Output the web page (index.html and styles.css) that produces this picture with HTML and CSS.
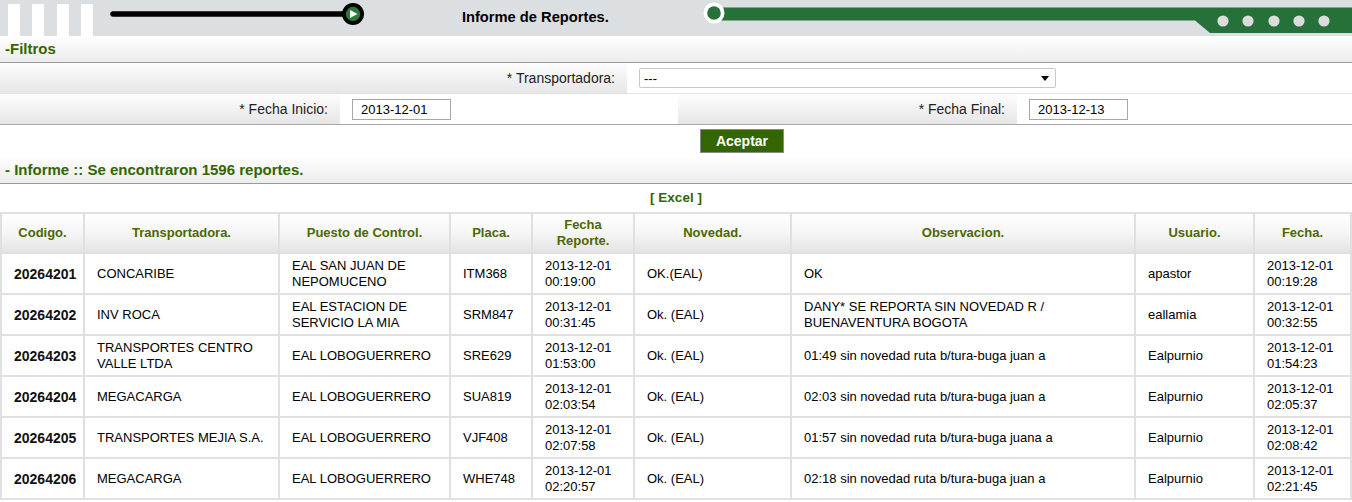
FILE: index.html
```html
<!DOCTYPE html>
<html lang="es">
<head>
<meta charset="utf-8">
<title>Informe de Reportes</title>
<link rel="stylesheet" href="styles.css">
</head>
<body>
<header class="top">
  <div class="bars"><span></span><span></span><span></span><span></span></div>
  <svg class="slider" width="270" height="36" viewBox="0 0 270 36">
    <line x1="12" y1="14" x2="245" y2="14" stroke="#000" stroke-width="5.5" stroke-linecap="round"/>
    <circle cx="252" cy="14" r="11" fill="#000"/>
    <circle cx="252" cy="14" r="7.2" fill="#2a7a3c"/>
    <polygon points="249,10 249,18 256.5,14" fill="#fff"/>
  </svg>
  <h1 class="title">Informe de Reportes.</h1>
  <svg class="track" width="652" height="36" viewBox="0 0 652 36">
    <path d="M18,7.5 H652 V33 H510 L495,20.5 H18 Z" fill="#26713a"/>
    <circle cx="14" cy="13" r="10.5" fill="#fff"/>
    <circle cx="14" cy="13" r="6.8" fill="#26713a"/>
    <circle cx="523" cy="21" r="5.6" fill="#dcdcdc"/>
    <circle cx="548" cy="21" r="5.6" fill="#dcdcdc"/>
    <circle cx="574" cy="21" r="5.6" fill="#dcdcdc"/>
    <circle cx="599" cy="21" r="5.6" fill="#dcdcdc"/>
    <circle cx="624" cy="21" r="5.6" fill="#dcdcdc"/>
  </svg>
</header>

<div class="section-bar">-Filtros</div>

<div class="frow frow-1">
  <div class="lbl">* Transportadora:</div>
  <div class="fld">
    <div class="select"><span>---</span><span class="arrow"></span></div>
  </div>
</div>
<div class="frow frow-2">
  <div class="lbl">* Fecha Inicio:</div>
  <div class="fld"><input class="date" type="text" value="2013-12-01"></div>
  <div class="lbl">* Fecha Final:</div>
  <div class="fld"><input class="date" type="text" value="2013-12-13"></div>
</div>
<div class="actions"><button class="btn" type="button">Aceptar</button></div>

<div class="section-bar informe">- Informe :: Se encontraron 1596 reportes.</div>
<div class="excel">[ Excel ]</div>

<table class="grid">
  <colgroup>
    <col class="c1"><col class="c2"><col class="c3"><col class="c4"><col class="c5"><col class="c6"><col class="c7"><col class="c8"><col class="c9">
  </colgroup>
  <thead>
    <tr>
      <th>Codigo.</th><th>Transportadora.</th><th>Puesto de Control.</th><th>Placa.</th><th>Fecha<br>Reporte.</th><th>Novedad.</th><th>Observacion.</th><th>Usuario.</th><th>Fecha.</th>
    </tr>
  </thead>
  <tbody>
    <tr><td class="code">20264201</td><td>CONCARIBE</td><td>EAL SAN JUAN DE NEPOMUCENO</td><td>ITM368</td><td>2013-12-01<br>00:19:00</td><td>OK.(EAL)</td><td>OK</td><td>apastor</td><td>2013-12-01<br>00:19:28</td></tr>
    <tr><td class="code">20264202</td><td>INV ROCA</td><td>EAL ESTACION DE SERVICIO LA MIA</td><td>SRM847</td><td>2013-12-01<br>00:31:45</td><td>Ok. (EAL)</td><td>DANY* SE REPORTA SIN NOVEDAD R / BUENAVENTURA BOGOTA</td><td>eallamia</td><td>2013-12-01<br>00:32:55</td></tr>
    <tr><td class="code">20264203</td><td>TRANSPORTES CENTRO VALLE LTDA</td><td>EAL LOBOGUERRERO</td><td>SRE629</td><td>2013-12-01<br>01:53:00</td><td>Ok. (EAL)</td><td>01:49 sin novedad ruta b/tura-buga juan a</td><td>Ealpurnio</td><td>2013-12-01<br>01:54:23</td></tr>
    <tr><td class="code">20264204</td><td>MEGACARGA</td><td>EAL LOBOGUERRERO</td><td>SUA819</td><td>2013-12-01<br>02:03:54</td><td>Ok. (EAL)</td><td>02:03 sin novedad ruta b/tura-buga juan a</td><td>Ealpurnio</td><td>2013-12-01<br>02:05:37</td></tr>
    <tr><td class="code">20264205</td><td>TRANSPORTES MEJIA S.A.</td><td>EAL LOBOGUERRERO</td><td>VJF408</td><td>2013-12-01<br>02:07:58</td><td>Ok. (EAL)</td><td>01:57 sin novedad ruta b/tura-buga juana a</td><td>Ealpurnio</td><td>2013-12-01<br>02:08:42</td></tr>
    <tr><td class="code">20264206</td><td>MEGACARGA</td><td>EAL LOBOGUERRERO</td><td>WHE748</td><td>2013-12-01<br>02:20:57</td><td>Ok. (EAL)</td><td>02:18 sin novedad ruta b/tura-buga juan a</td><td>Ealpurnio</td><td>2013-12-01<br>02:21:45</td></tr>
  </tbody>
</table>
</body>
</html>
```

FILE: styles.css
```css
html, body {
  margin: 0;
  padding: 0;
  overflow: hidden;
}
body {
  font-family: "Liberation Sans", Arial, sans-serif;
  font-size: 13px;
  color: #000;
  background: #fff;
}

/* header */
.top {
  display: flex;
  align-items: flex-start;
  height: 36px;
  background: #dcdfe2;
}
.bars {
  display: flex;
  gap: 12.3px;
  margin-left: 8px;
  padding-top: 4px;
  height: 32px;
}
.bars span {
  display: block;
  width: 12px;
  height: 32px;
  background: #fff;
}
.slider {
  display: block;
  margin-left: 8px;
  flex: none;
}
.title {
  margin: 0 0 0 91px;
  font-size: 14.7px;
  font-weight: bold;
  line-height: 35px;
  color: #000;
  white-space: nowrap;
}
.track {
  display: block;
  margin-left: auto;
  flex: none;
}

/* section bars */
.section-bar {
  height: 26px;
  line-height: 25px;
  padding-left: 5px;
  font-size: 15px;
  font-weight: bold;
  color: #336600;
  background: linear-gradient(#ffffff, #ececec);
  border-bottom: 1px solid #9a9a9a;
}
.section-bar.informe {
  height: 27px;
  line-height: 28px;
}

/* filter rows */
.frow {
  display: grid;
  height: 30px;
  border-bottom: 1px solid #e4e4e4;
}
.frow-1 {
  grid-template-columns: 627px 1fr;
}
.frow-2 {
  grid-template-columns: 340px 338px 339px 1fr;
  border-bottom: 1px solid #a9a9a9;
}
.lbl {
  display: flex;
  align-items: center;
  justify-content: flex-end;
  padding-right: 12px;
  font-size: 14px;
  color: #222;
  background: linear-gradient(#fdfdfd, #e6e6e6);
}
.fld {
  display: flex;
  align-items: center;
  padding-left: 12px;
  background: #fff;
}
.select {
  display: flex;
  align-items: center;
  justify-content: space-between;
  box-sizing: border-box;
  width: 417px;
  height: 20px;
  padding: 0 6px 0 4px;
  border: 1px solid #c8c8c8;
  border-radius: 2px;
  background: #fff;
  color: #000;
  font-size: 13px;
}
.arrow {
  width: 0;
  height: 0;
  border-left: 4px solid transparent;
  border-right: 4px solid transparent;
  border-top: 5px solid #000;
}
.date {
  box-sizing: border-box;
  width: 99px;
  height: 21px;
  padding: 0 0 0 8px;
  margin: 0;
  border: 1px solid #a8a8a8;
  font-family: "Liberation Sans", Arial, sans-serif;
  font-size: 13px;
  color: #000;
  background: #fff;
}

.actions {
  height: 31px;
  padding-left: 700px;
  padding-top: 4px;
  box-sizing: border-box;
}
.btn {
  display: block;
  box-sizing: border-box;
  width: 84px;
  height: 24px;
  margin: 0;
  padding: 0;
  border: 1px solid #8a8a8a;
  background: #336600;
  color: #fff;
  font-family: "Liberation Sans", Arial, sans-serif;
  font-size: 14px;
  font-weight: bold;
}

.excel {
  height: 28px;
  line-height: 28px;
  text-align: center;
  font-size: 13.5px;
  font-weight: bold;
  color: #336600;
}

/* table */
.grid {
  width: 1352px;
  table-layout: fixed;
  border-collapse: separate;
  border-spacing: 2px;
  background: #e0e0e0;
  margin: 0;
}
.c1 { width: 81px; }
.c2 { width: 193px; }
.c3 { width: 169px; }
.c4 { width: 80px; }
.c5 { width: 100px; }
.c6 { width: 155px; }
.c7 { width: 342px; }
.c8 { width: 117px; }
.c9 { width: auto; }
.grid th {
  height: 38px;
  padding: 0 4px;
  font-weight: bold;
  color: #4d6800;
  text-align: center;
  line-height: 16px;
  background: linear-gradient(#ffffff 0%, #f4f4f4 55%, #e4e4e4 100%);
}
.grid td {
  height: 39px;
  padding: 0 4px 0 12px;
  line-height: 16px;
  background: #fff;
  color: #000;
  text-align: left;
  vertical-align: middle;
}
.grid td.code {
  font-size: 14px;
  font-weight: bold;
  color: #111;
}
```
